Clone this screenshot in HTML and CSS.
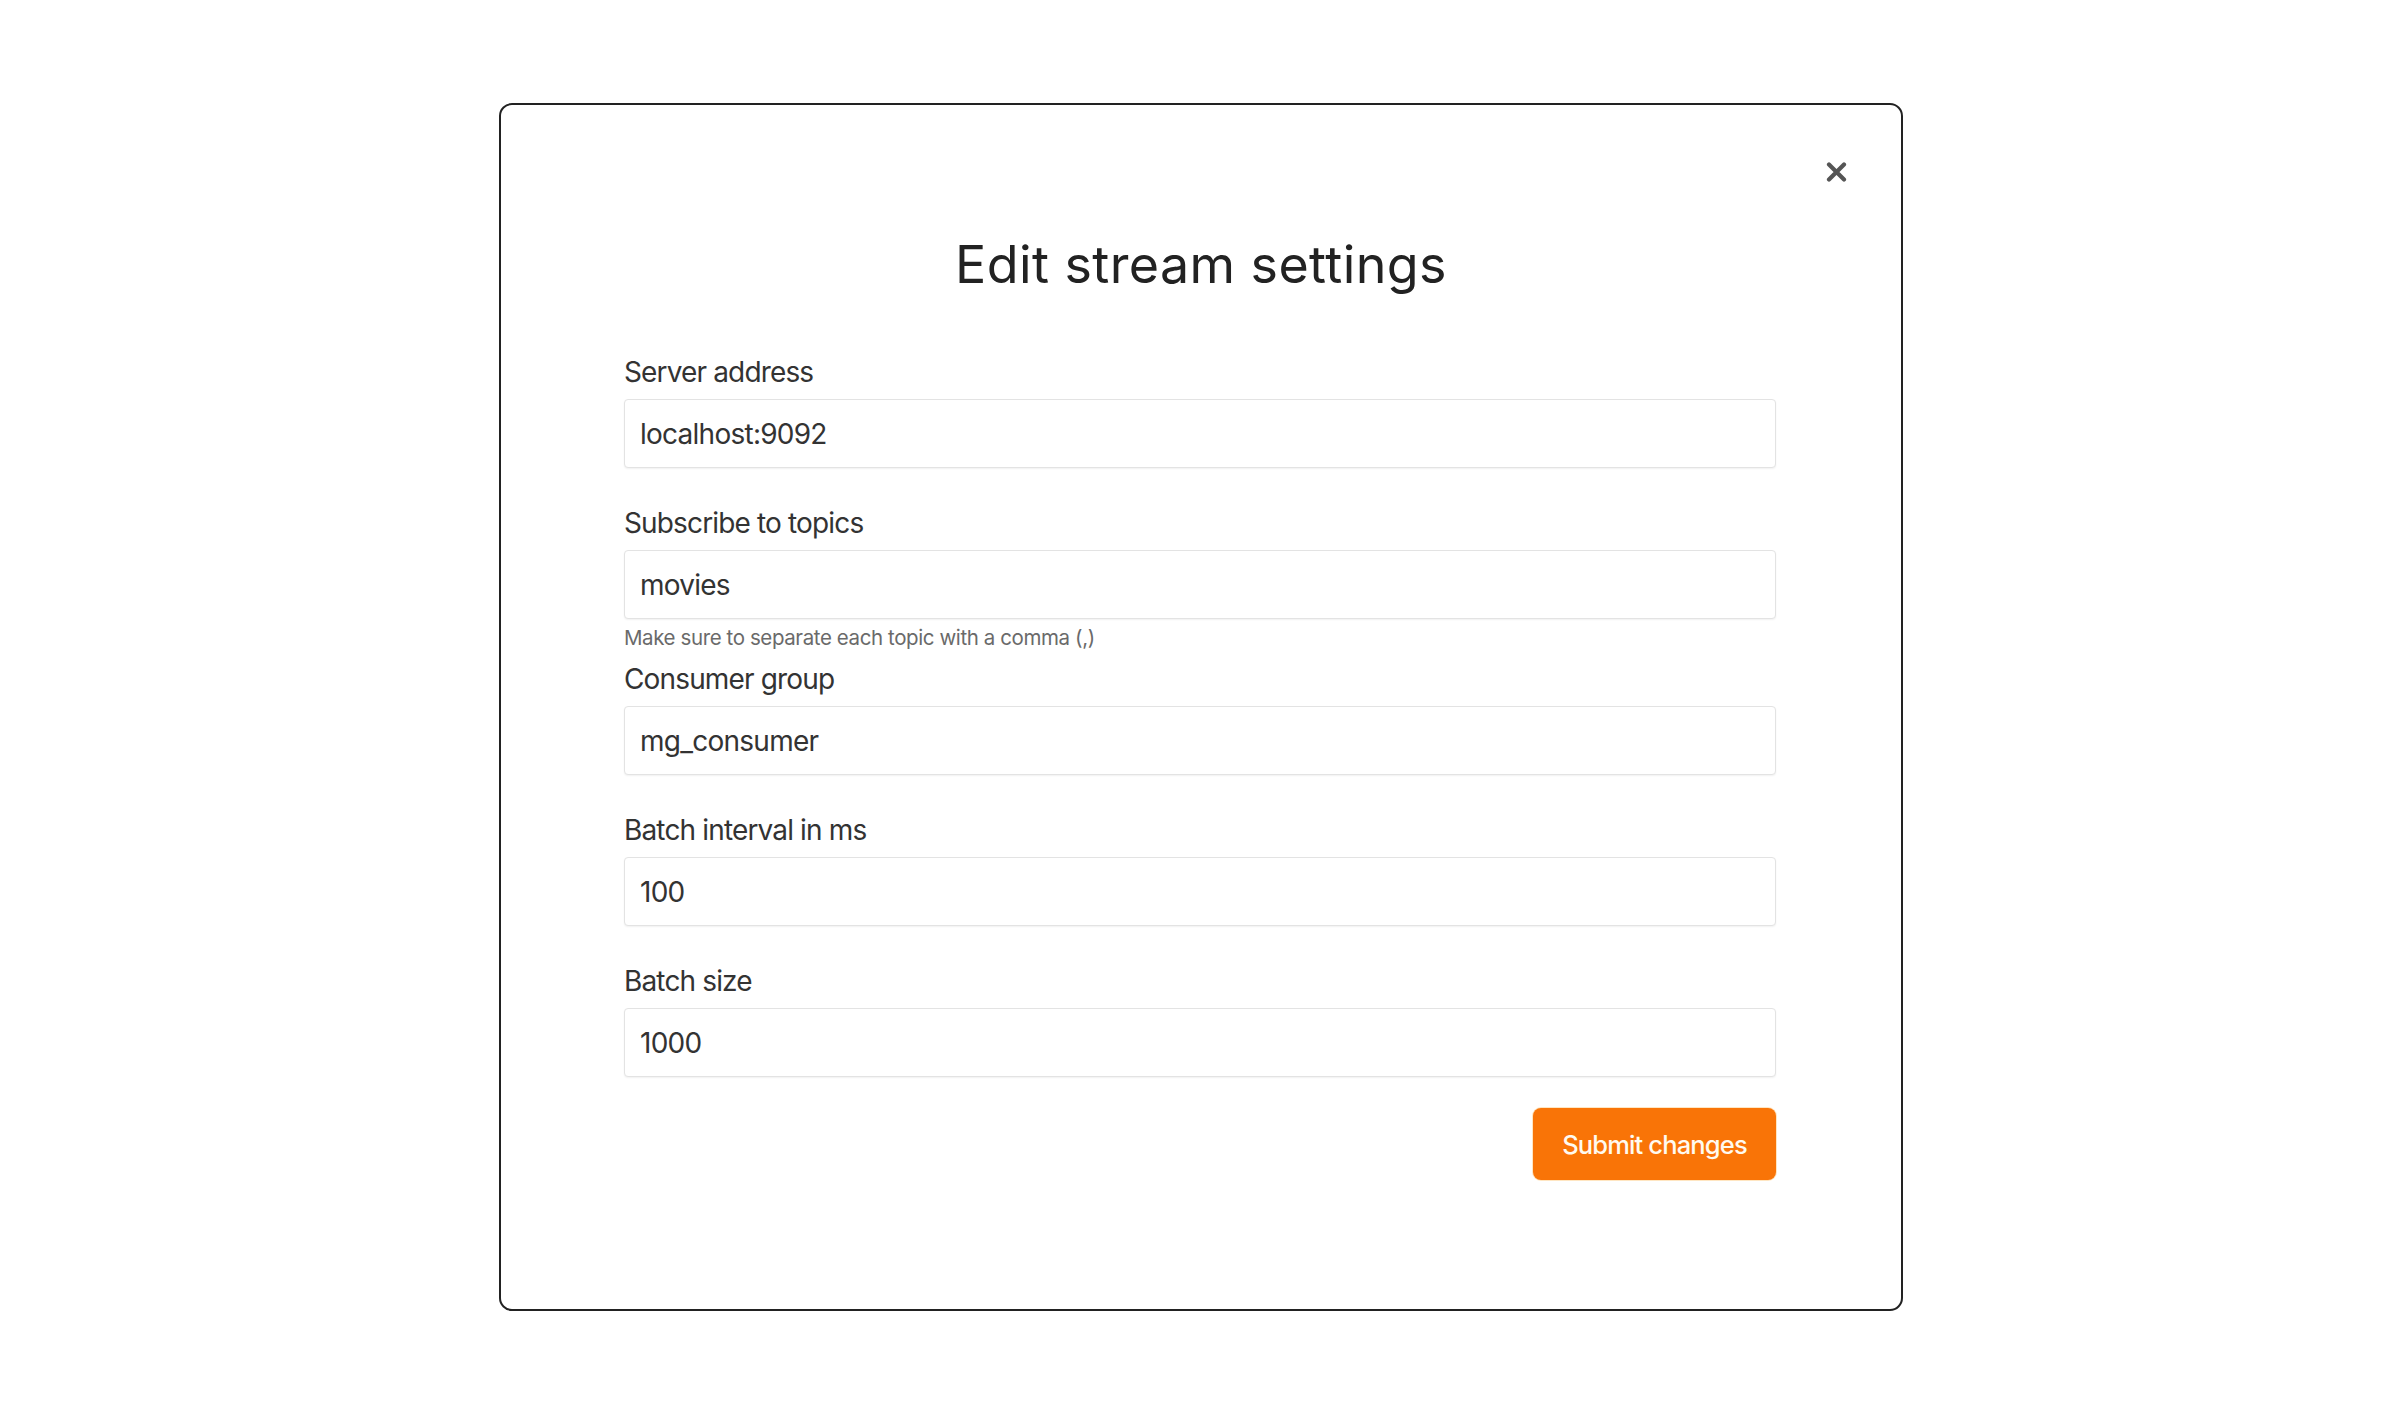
FILE: index.html
```html
<!DOCTYPE html>
<html lang="en">
<head>
<meta charset="utf-8">
<title>Edit stream settings</title>
<link rel="stylesheet" href="styles.css">
</head>
<body>
<div class="modal">
  <button class="close" type="button" aria-label="Close">
    <svg width="21" height="20" viewBox="0 0 21 20"><path d="M3 2.5 L18 17.5 M18 2.5 L3 17.5" stroke="#555" stroke-width="4.2" stroke-linecap="round" fill="none"/></svg>
  </button>
  <h1 class="title">Edit stream settings</h1>
  <form class="form">
    <div class="group">
      <label class="label">Server address</label>
      <input class="input" type="text" value="localhost:9092">
    </div>
    <div class="group has-hint">
      <label class="label">Subscribe to topics</label>
      <input class="input" type="text" value="movies">
      <div class="hint">Make sure to separate each topic with a comma (,)</div>
    </div>
    <div class="group">
      <label class="label">Consumer group</label>
      <input class="input" type="text" value="mg_consumer">
    </div>
    <div class="group">
      <label class="label">Batch interval in ms</label>
      <input class="input" type="text" value="100">
    </div>
    <div class="group last">
      <label class="label">Batch size</label>
      <input class="input" type="text" value="1000">
    </div>
    <div class="actions">
      <button class="submit" type="button">Submit changes</button>
    </div>
  </form>
</div>
</body>
</html>
```
FILE: styles.css
```css
* { box-sizing: border-box; }
html, body { margin: 0; padding: 0; background: #ffffff; }
body {
  font-family: Inter, "Noto Sans", "Liberation Sans", sans-serif;
  color: #333333;
  padding-top: 103px;
}
.modal {
  position: relative;
  width: 1404px;
  margin-left: 499px;
  border: 2px solid #222222;
  border-radius: 13px;
  background: #ffffff;
  padding: 132px 0 129px;
}
.close {
  position: absolute;
  top: 57px;
  right: 54px;
  width: 21px;
  height: 20px;
  padding: 0;
  border: 0;
  background: transparent;
  display: flex;
  cursor: pointer;
}
.title {
  margin: 0;
  text-align: center;
  font-size: 52px;
  line-height: 56px;
  font-weight: 400;
  letter-spacing: 0.4px;
  color: #222222;
}
.form {
  margin: 62px 125px 0 123px;
  display: flex;
  flex-direction: column;
}
.group {
  display: flex;
  flex-direction: column;
  margin-bottom: 38px;
}
.group.has-hint { margin-bottom: 11px; }
.group.last { margin-bottom: 0; }
.label {
  font-size: 28px;
  line-height: 34px;
  letter-spacing: -0.85px;
  color: #333333;
  margin-bottom: 10px;
}
.input {
  height: 69px;
  width: 100%;
  border: 1.5px solid #e3e3e3;
  border-radius: 4px;
  box-shadow: 0 1px 2px rgba(0,0,0,0.06);
  padding: 0 15px;
  font-family: inherit;
  font-size: 28px;
  letter-spacing: -0.75px;
  color: #333333;
  background: #ffffff;
  outline: none;
}
.hint {
  margin-top: 6px;
  font-size: 20.5px;
  line-height: 26px;
  letter-spacing: -0.4px;
  color: #6a6a6a;
}
.actions {
  display: flex;
  justify-content: flex-end;
  margin-top: 31px;
}
.submit {
  width: 243px;
  height: 72px;
  border: 0;
  border-radius: 8px;
  background: #f97407;
  box-shadow: 0 0 0 1px #ffe6c2;
  color: #fffaf0;
  font-family: inherit;
  font-size: 25.5px;
  font-weight: 500;
  letter-spacing: -0.85px;
  cursor: pointer;
}
```
